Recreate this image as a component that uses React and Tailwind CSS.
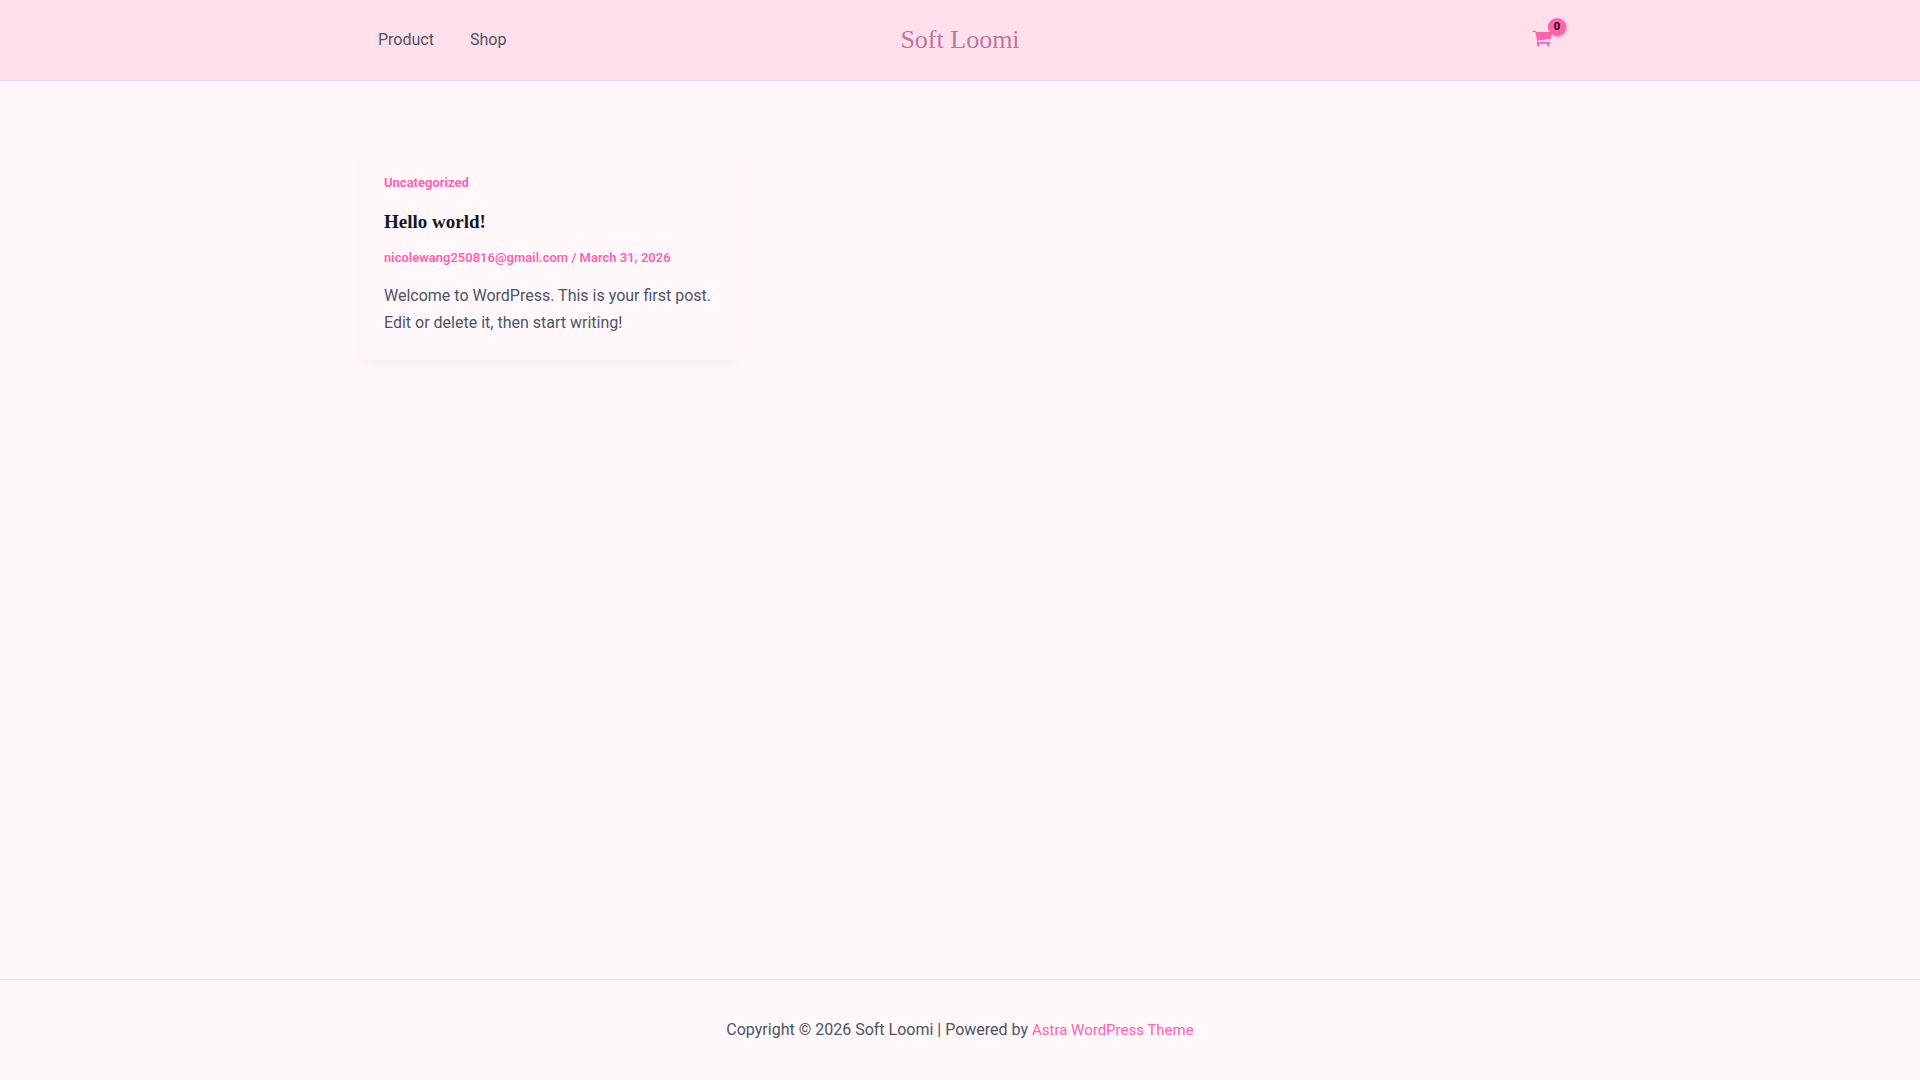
const menu = [
  { label: 'Product', href: '#product' },
  { label: 'Shop', href: '#shop' },
];

const posts = [
  {
    category: 'Uncategorized',
    title: 'Hello world!',
    author: 'nicolewang250816@gmail.com',
    date: 'March 31, 2026',
    excerpt: 'Welcome to WordPress. This is your first post. Edit or delete it, then start writing!',
  },
];

function CartIcon() {
  return (
    <svg className="w-5 h-[18px]" viewBox="0 0 20 18" fill="currentColor" aria-hidden="true">
      {/* handle and basket */}
      <path d="M.4.7h3.5L4.5 2h14.8v6.8L6.3 10.5V12H18v1.7H5.1V10.6L3.3 1.9H.4z" />
      {/* wheels */}
      <path d="M5.1 13h2.2v2.4a1.1 1.1 0 0 1-2.2 0zM15.1 13h2.2v2.4a1.1 1.1 0 0 1-2.2 0z" />
    </svg>
  );
}

function Header({ cartCount }) {
  return (
    <header className="bg-[#ffdfeb] border-b border-[#fcd3e6]">
      <div className="max-w-[1240px] h-20 mx-auto px-5 grid grid-cols-[1fr_auto_1fr] items-center">
        <nav className="flex">
          {menu.map((item) => (
            <a key={item.label} href={item.href} className="px-[18px] text-base leading-6">
              {item.label}
            </a>
          ))}
        </nav>
        <a href="#home" className="font-['Liberation_Serif',serif] text-[26px] leading-8 text-[#c0769e]">
          Soft Loomi
        </a>
        <a href="#cart" aria-label="View cart" className="relative justify-self-end mr-2 mb-0.5 text-[#ff62b0]">
          <CartIcon />
          <span className="absolute -top-3 -right-3.5 size-[18px] rounded-full bg-[#ff62b0] text-black text-[11px] leading-[18px] font-bold text-center shadow-[1px_1px_3px_rgba(0,0,0,0.3)]">
            {cartCount}
          </span>
        </a>
      </div>
    </header>
  );
}

function PostCard({ post }) {
  return (
    <article className="p-6 rounded-md bg-[#fff7fa] shadow-[0_6px_15px_-2px_rgba(16,24,40,0.05)]">
      <a href="#category" className="block text-[13px] leading-7 font-bold text-[#ff62b0]">
        {post.category}
      </a>
      <h2 className="mt-[11px] font-['Liberation_Serif',serif] text-[19px] leading-7 font-bold text-[#0f172a]">
        <a href="#post">{post.title}</a>
      </h2>
      <div className="mt-2.5 text-[13px] leading-6 font-semibold text-[#ff62b0]">
        <a href="#author">{post.author}</a> / {post.date}
      </div>
      <p className="mt-3 text-base leading-[27px]">{post.excerpt}</p>
    </article>
  );
}

export default function App() {
  return (
    <div className="min-h-screen flex flex-col bg-[#fff7fa] text-[#4b5563] font-[Roboto,sans-serif]">
      <Header cartCount={0} />
      <main className="flex-1 w-full max-w-[1240px] mx-auto px-5 py-16">
        <div className="grid grid-cols-3 gap-[31px] items-start">
          {posts.map((post) => (
            <PostCard key={post.title} post={post} />
          ))}
        </div>
      </main>
      <footer className="border-t border-[#fcdbe7] py-9 text-center">
        <p className="text-base leading-7">
          Copyright © 2026 Soft Loomi | Powered by{' '}
          <a href="#astra" className="text-[15px] text-[#ff62b0]">Astra WordPress Theme</a>
        </p>
      </footer>
    </div>
  );
}
